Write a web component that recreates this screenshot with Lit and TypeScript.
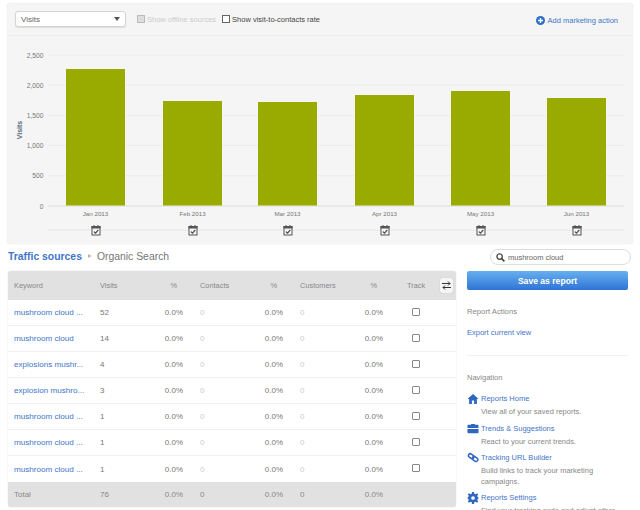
import { LitElement, css, html, svg } from "lit";
import { customElement } from "lit/decorators.js";

const months = [
  { label: "Jan 2013", x: 66, top: 69 },
  { label: "Feb 2013", x: 163, top: 101 },
  { label: "Mar 2013", x: 258, top: 102 },
  { label: "Apr 2013", x: 355, top: 95 },
  { label: "May 2013", x: 451, top: 91 },
  { label: "Jun 2013", x: 547, top: 98 },
];

const ticks = ["2,500", "2,000", "1,500", "1,000", "500", "0"];

const keywords: [string, string][] = [
  ["mushroom cloud ...", "52"],
  ["mushroom cloud", "14"],
  ["explosions mushr...", "4"],
  ["explosion mushro...", "3"],
  ["mushroom cloud ...", "1"],
  ["mushroom cloud ...", "1"],
  ["mushroom cloud ...", "1"],
];

const navItems = [
  {
    title: "Reports Home",
    text: "View all of your saved reports.",
    icon: svg`<path d="M6 1 L0 6.5 H1.8 V12 H4.8 V8 H7.2 V12 H10.2 V6.5 H12 Z" />`,
  },
  {
    title: "Trends & Suggestions",
    text: "React to your current trends.",
    icon: svg`<path d="M4 2 V1 H8 V2 H11 Q12 2 12 3 V5.5 H0 V3 Q0 2 1 2 Z M0 6.5 H12 V10 Q12 11 11 11 H1 Q0 11 0 10 Z" />`,
  },
  {
    title: "Tracking URL Builder",
    text: "Build links to track your marketing campaigns.",
    icon: svg`<g fill="none" stroke="currentColor" stroke-width="1.6"><rect x="0.6" y="2.6" width="6.4" height="4" rx="2" transform="rotate(35 4 5)" /><rect x="5" y="5.4" width="6.4" height="4" rx="2" transform="rotate(35 8 7.6)" /></g>`,
  },
  {
    title: "Reports Settings",
    text: "Find your tracking code and adjust other settings.",
    icon: svg`<path d="M5 0 H7 L7.4 1.8 L8.9 2.4 L10.4 1.4 L11.6 2.6 L10.6 4.1 L11.2 5.6 L12 6 V7 L11.2 7.4 L10.6 8.9 L11.6 10.4 L10.4 11.6 L8.9 10.6 L7.4 11.2 L7 13 H5 L4.6 11.2 L3.1 10.6 L1.6 11.6 L0.4 10.4 L1.4 8.9 L0.8 7.4 L0 7 V6 L0.8 5.6 L1.4 4.1 L0.4 2.6 L1.6 1.4 L3.1 2.4 L4.6 1.8 Z M6 4.5 A2 2 0 1 0 6 8.5 A2 2 0 1 0 6 4.5 Z" fill-rule="evenodd" />`,
  },
];

const calendarIcon = (cx: number) => svg`
  <g transform="translate(${cx - 4.5} 225)">
    <rect x="0.5" y="1.5" width="8" height="8.5" fill="#f5f5f5" stroke="#555" />
    <rect x="0" y="1" width="9" height="2.5" fill="#555" />
    <rect x="2" y="0" width="1" height="2" fill="#555" />
    <rect x="6" y="0" width="1" height="2" fill="#555" />
    <path d="M2.4 6.6 L4 8.2 L6.8 4.8" fill="none" stroke="#444" stroke-width="1.1" />
  </g>
`;

@customElement("app-root")
export class AppRoot extends LitElement {
  static styles = css`
    :host {
      display: block;
      width: 640px;
      height: 510px;
      overflow: hidden;
      background: #fff;
      color: #777;
      font-family: "Liberation Sans", Arial, sans-serif;
      font-size: 8px;
    }

    * {
      box-sizing: border-box;
    }

    a {
      color: #3f75c9;
      text-decoration: none;
    }

    .panel {
      width: 626px;
      height: 241px;
      margin: 3px 0 0 7px;
      border-radius: 4px;
      background: #f5f5f5;
      box-shadow: 0 0 1px #ccc;
    }

    .toolbar {
      display: flex;
      align-items: center;
      height: 33px;
      padding: 0 15px 0 8px;
      border-bottom: 1px solid #eee;
      font-size: 7.5px;
    }

    .select {
      display: flex;
      align-items: center;
      justify-content: space-between;
      width: 111px;
      height: 16px;
      padding: 0 5px;
      border: 1px solid #d4d4d4;
      border-radius: 3px;
      background: #fff;
      box-shadow: 0 1px 1px #ddd;
      color: #666;
      font-size: 8px;
    }

    .caret {
      width: 0;
      height: 0;
      border: 3px solid transparent;
      border-top: 4px solid #555;
      border-bottom: 0;
    }

    .check {
      display: flex;
      align-items: center;
      gap: 2px;
      color: #444;
      white-space: nowrap;
    }

    .check.off {
      margin-left: 11px;
      color: #ccc;
    }

    .check.on {
      margin-left: 6px;
    }

    .box {
      width: 8px;
      height: 8px;
      border: 1px solid #666;
      background: #fff;
    }

    .off .box {
      border-color: #bbb;
      background: #ddd;
    }

    .add {
      display: flex;
      align-items: center;
      gap: 3px;
      margin: 2px 0 0 auto;
      white-space: nowrap;
    }

    .add svg {
      flex: none;
    }

    .chart {
      display: block;
    }

    .chart text {
      fill: #777;
      font-family: "Liberation Sans", Arial, sans-serif;
      font-size: 6.7px;
    }

    .chart text.month {
      font-size: 6.2px;
    }

    .chart .axis-title {
      fill: #5a6a80;
      font-size: 7px;
      font-weight: bold;
    }

    .crumb-row {
      display: flex;
      justify-content: space-between;
      height: 27px;
      padding: 5px 9px 0 8px;
    }

    .crumb {
      display: flex;
      align-items: center;
      height: 16px;
      margin-top: -1px;
      color: #777;
      font-size: 10.4px;
      white-space: nowrap;
    }

    .crumb b {
      color: #3f75c9;
    }

    .crumb i {
      width: 0;
      height: 0;
      margin: 0 5px 0 6px;
      border: 2.5px solid transparent;
      border-left: 4px solid #bbb;
      border-right: 0;
    }

    .search {
      display: flex;
      align-items: center;
      gap: 3px;
      width: 141px;
      height: 16px;
      padding: 0 5px;
      border: 1px solid #ddd;
      border-radius: 8px;
      color: #666;
      font-size: 7.5px;
    }

    .content {
      display: flex;
      align-items: flex-start;
      padding-left: 8px;
    }

    table {
      flex: none;
      width: 448px;
      border-collapse: separate;
      border-spacing: 0;
      table-layout: fixed;
      border-radius: 3px;
      overflow: hidden;
      box-shadow: 0 0 1px #bbb;
    }

    th,
    td {
      padding: 0 0 0 6px;
      overflow: hidden;
      text-align: left;
      font-weight: normal;
      white-space: nowrap;
    }

    thead th {
      height: 29px;
      background: #e1e1e1;
      color: #888;
      font-size: 7.4px;
    }

    tbody td {
      height: 26px;
      border-bottom: 1px solid #f2f2f2;
      color: #777;
    }

    tbody td a {
      font-size: 8.1px;
    }

    tbody tr:last-child td {
      border-bottom: 0;
    }

    tfoot td {
      height: 25px;
      background: #e1e1e1;
      color: #888;
    }

    .pct {
      padding: 0;
      text-align: right;
    }

    thead .pct {
      padding-right: 6px;
    }

    .count {
      padding-left: 17px;
    }

    .track {
      padding-left: 24px;
    }

    .zero {
      color: #ccc;
    }

    tfoot .zero {
      color: #888;
    }

    .tick {
      display: block;
      width: 8px;
      height: 8px;
      margin: -2px 0 0 5px;
      border: 1px solid #888;
      border-radius: 1px;
      background: #fff;
    }

    .swap-cell {
      padding-left: 4px;
    }

    .swap {
      display: flex;
      align-items: center;
      justify-content: center;
      width: 13px;
      height: 15px;
      border-radius: 2px;
      background: #f5f5f5;
      box-shadow: 0 0 1px #999;
    }

    aside {
      flex: none;
      width: 161px;
      margin-left: 11px;
      font-size: 7.5px;
    }

    .save {
      display: flex;
      align-items: center;
      justify-content: center;
      height: 19px;
      border-radius: 2px;
      background: linear-gradient(#67b0ee, #2f74d6);
      color: #fff;
      font-size: 8.6px;
      font-weight: bold;
    }

    .section {
      padding: 17px 0 18px;
      border-bottom: 1px solid #f2f2f2;
    }

    .section h4 {
      margin: 0;
      color: #888;
      font-size: 7.7px;
      font-weight: normal;
    }

    .section a {
      display: block;
      margin-top: 12px;
    }

    .nav-title {
      margin: 17px 0 12px;
      color: #888;
    }

    .nav-item {
      display: grid;
      grid-template-columns: 14px 1fr;
      margin-top: 6px;
      line-height: 10.5px;
    }

    .nav-item svg {
      color: #2f66c0;
      fill: currentColor;
      margin-top: -1px;
    }

    .nav-item p {
      grid-column: 2;
      margin: 2px 0 0;
      color: #888;
    }
  `;

  render() {
    return html`
      <section class="panel">
        <div class="toolbar">
          <div class="select">Visits<span class="caret"></span></div>
          <label class="check off"><span class="box"></span>Show offline sources</label>
          <label class="check on"><span class="box"></span>Show visit-to-contacts rate</label>
          <a class="add" href="#">
            <svg width="9" height="9" viewBox="0 0 9 9">
              <circle cx="4.5" cy="4.5" r="4.5" fill="#2f6fc4" />
              <path d="M2 4.5 H7 M4.5 2 V7" stroke="#fff" stroke-width="1.4" />
            </svg>
            Add marketing action
          </a>
        </div>
        ${this.renderChart()}
      </section>

      <div class="crumb-row">
        <div class="crumb"><b>Traffic sources</b><i></i>Organic Search</div>
        <div class="search">
          <svg width="9" height="9" viewBox="0 0 9 9">
            <circle cx="3.6" cy="3.6" r="2.7" fill="none" stroke="#444" stroke-width="1.3" />
            <path d="M5.6 5.6 L8.4 8.4" stroke="#444" stroke-width="1.6" />
          </svg>
          mushroom cloud
        </div>
      </div>

      <div class="content">
        ${this.renderTable()}
        <aside>
          <div class="save">Save as report</div>
          <div class="section">
            <h4>Report Actions</h4>
            <a href="#">Export current view</a>
          </div>
          <div class="nav-title">Navigation</div>
          ${navItems.map(
            (item) => html`
              <div class="nav-item">
                <svg width="12" height="12" viewBox="0 0 12 13">${item.icon}</svg>
                <a href="#">${item.title}</a>
                <p>${item.text}</p>
              </div>
            `,
          )}
        </aside>
      </div>
    `;
  }

  private renderChart() {
    // The panel starts at x=7, y=3 in the page; the svg spans y=36 to y=244.
    return html`
      <svg class="chart" width="626" height="208" viewBox="7 36 626 208">
        ${ticks.map((tick, i) => {
          const y = 55 + i * 30.2;
          return svg`
            <line x1="48" x2="624" y1=${y} y2=${y} stroke=${i === 5 ? "#ddd" : "#ececec"} />
            <text x="43.5" y=${y + 2.5} text-anchor="end">${tick}</text>
          `;
        })}
        <text class="axis-title" transform="translate(22 130) rotate(-90)" text-anchor="middle">Visits</text>
        <line x1="48" x2="624" y1="230" y2="230" stroke="#e6e6e6" />
        ${months.map(
          (m) => svg`
            <rect x=${m.x} y=${m.top} width="59" height=${205.5 - m.top} fill="#9aab00" />
            <text class="month" x=${m.x + 29.5} y="216" text-anchor="middle">${m.label}</text>
            ${calendarIcon(m.x + 30)}
          `,
        )}
      </svg>
    `;
  }

  private renderTable() {
    return html`
      <table>
        <colgroup>
          <col style="width: 86px" />
          <col style="width: 50px" />
          <col style="width: 39px" />
          <col style="width: 60px" />
          <col style="width: 40px" />
          <col style="width: 60px" />
          <col style="width: 40px" />
          <col style="width: 53px" />
          <col style="width: 20px" />
        </colgroup>
        <thead>
          <tr>
            <th>Keyword</th>
            <th>Visits</th>
            <th class="pct">%</th>
            <th class="count">Contacts</th>
            <th class="pct">%</th>
            <th class="count">Customers</th>
            <th class="pct">%</th>
            <th class="track">Track</th>
            <th class="swap-cell"><span class="swap">
              <svg width="9" height="9" viewBox="0 0 9 9" fill="none" stroke="#333">
                <path d="M0 2.5 H8 M6 0.5 L8 2.5 L6 4.5 M9 6.5 H1 M3 4.5 L1 6.5 L3 8.5" />
              </svg>
            </span></th>
          </tr>
        </thead>
        <tbody>
          ${keywords.map(
            ([keyword, visits]) => html`
              <tr>
                <td><a href="#">${keyword}</a></td>
                <td>${visits}</td>
                <td class="pct">0.0%</td>
                <td class="count zero">0</td>
                <td class="pct">0.0%</td>
                <td class="count zero">0</td>
                <td class="pct">0.0%</td>
                <td class="track"><span class="tick"></span></td>
                <td></td>
              </tr>
            `,
          )}
        </tbody>
        <tfoot>
          <tr>
            <td>Total</td>
            <td>76</td>
            <td class="pct">0.0%</td>
            <td class="count">0</td>
            <td class="pct">0.0%</td>
            <td class="count">0</td>
            <td class="pct">0.0%</td>
            <td></td>
            <td></td>
          </tr>
        </tfoot>
      </table>
    `;
  }
}
